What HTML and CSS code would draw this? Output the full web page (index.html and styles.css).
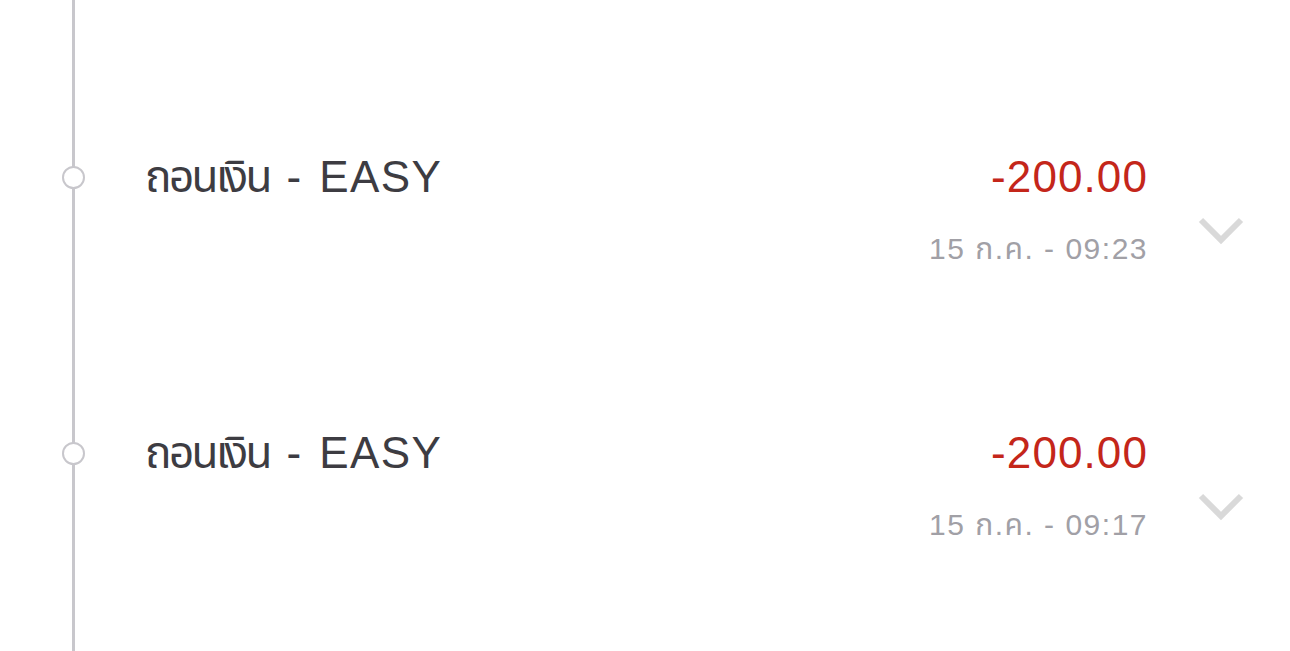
FILE: index.html
```html
<!DOCTYPE html>
<html lang="th">
<head>
<meta charset="utf-8">
<title>รายการ</title>
<link rel="stylesheet" href="styles.css">
</head>
<body>
<div class="list">
  <div class="row">
    <div class="marker"><span class="dot"></span></div>
    <div class="title"><span class="th">ถอนเงิน</span> - EASY</div>
    <div class="meta">
      <div class="amount">-200.00</div>
      <div class="date">15 ก.ค. - 09:23</div>
    </div>
    <div class="toggle">
      <svg class="chev" width="46" height="30" viewBox="0 0 46 30"><path d="M3 3 L23 23 L43 3" fill="none" stroke="#d9d9d9" stroke-width="6"/></svg>
    </div>
  </div>
  <div class="row">
    <div class="marker"><span class="dot"></span></div>
    <div class="title"><span class="th">ถอนเงิน</span> - EASY</div>
    <div class="meta">
      <div class="amount">-200.00</div>
      <div class="date">15 ก.ค. - 09:17</div>
    </div>
    <div class="toggle">
      <svg class="chev" width="46" height="30" viewBox="0 0 46 30"><path d="M3 3 L23 23 L43 3" fill="none" stroke="#d9d9d9" stroke-width="6"/></svg>
    </div>
  </div>
</div>
</body>
</html>
```
FILE: styles.css
```css
html, body {
  margin: 0;
  padding: 0;
  background: #ffffff;
}
body {
  font-family: "Liberation Sans", "Noto Sans Thai", "Noto Sans Thai UI", "Noto Sans", "DejaVu Sans", sans-serif;
}
.list {
  min-height: 100vh;
  box-sizing: border-box;
  padding-top: 39px;
  background: linear-gradient(to right, transparent 72px, #c8c7cc 72px, #c8c7cc 75px, transparent 75px);
}
.row {
  height: 276px;
  box-sizing: border-box;
  padding-top: 112px;
  display: grid;
  grid-template-columns: 145px 1fr auto 143px;
  align-items: start;
}
.marker {
  height: 52px;
  display: flex;
  align-items: center;
  padding-left: 62px;
  box-sizing: border-box;
}
.dot {
  width: 23px;
  height: 23px;
  box-sizing: border-box;
  border: 2px solid #c8c7cc;
  border-radius: 50%;
  background: #fff;
}
.title {
  font-size: 44px;
  line-height: 52px;
  color: #3d3c42;
  letter-spacing: 1.4px;
  word-spacing: 3px;
}
.th {
  letter-spacing: -2.6px;
}
.meta {
  text-align: right;
}
.amount {
  font-size: 44px;
  line-height: 52px;
  color: #c4261a;
  letter-spacing: 1.1px;
  margin-right: -1px;
}
.date {
  margin-top: 28px;
  font-size: 30px;
  line-height: 36px;
  color: #a1a0a6;
  letter-spacing: 1.5px;
  margin-right: -1px;
}
.toggle {
  display: flex;
  justify-content: center;
  padding-top: 66px;
  padding-left: 4px;
}
.chev {
  display: block;
}
```
